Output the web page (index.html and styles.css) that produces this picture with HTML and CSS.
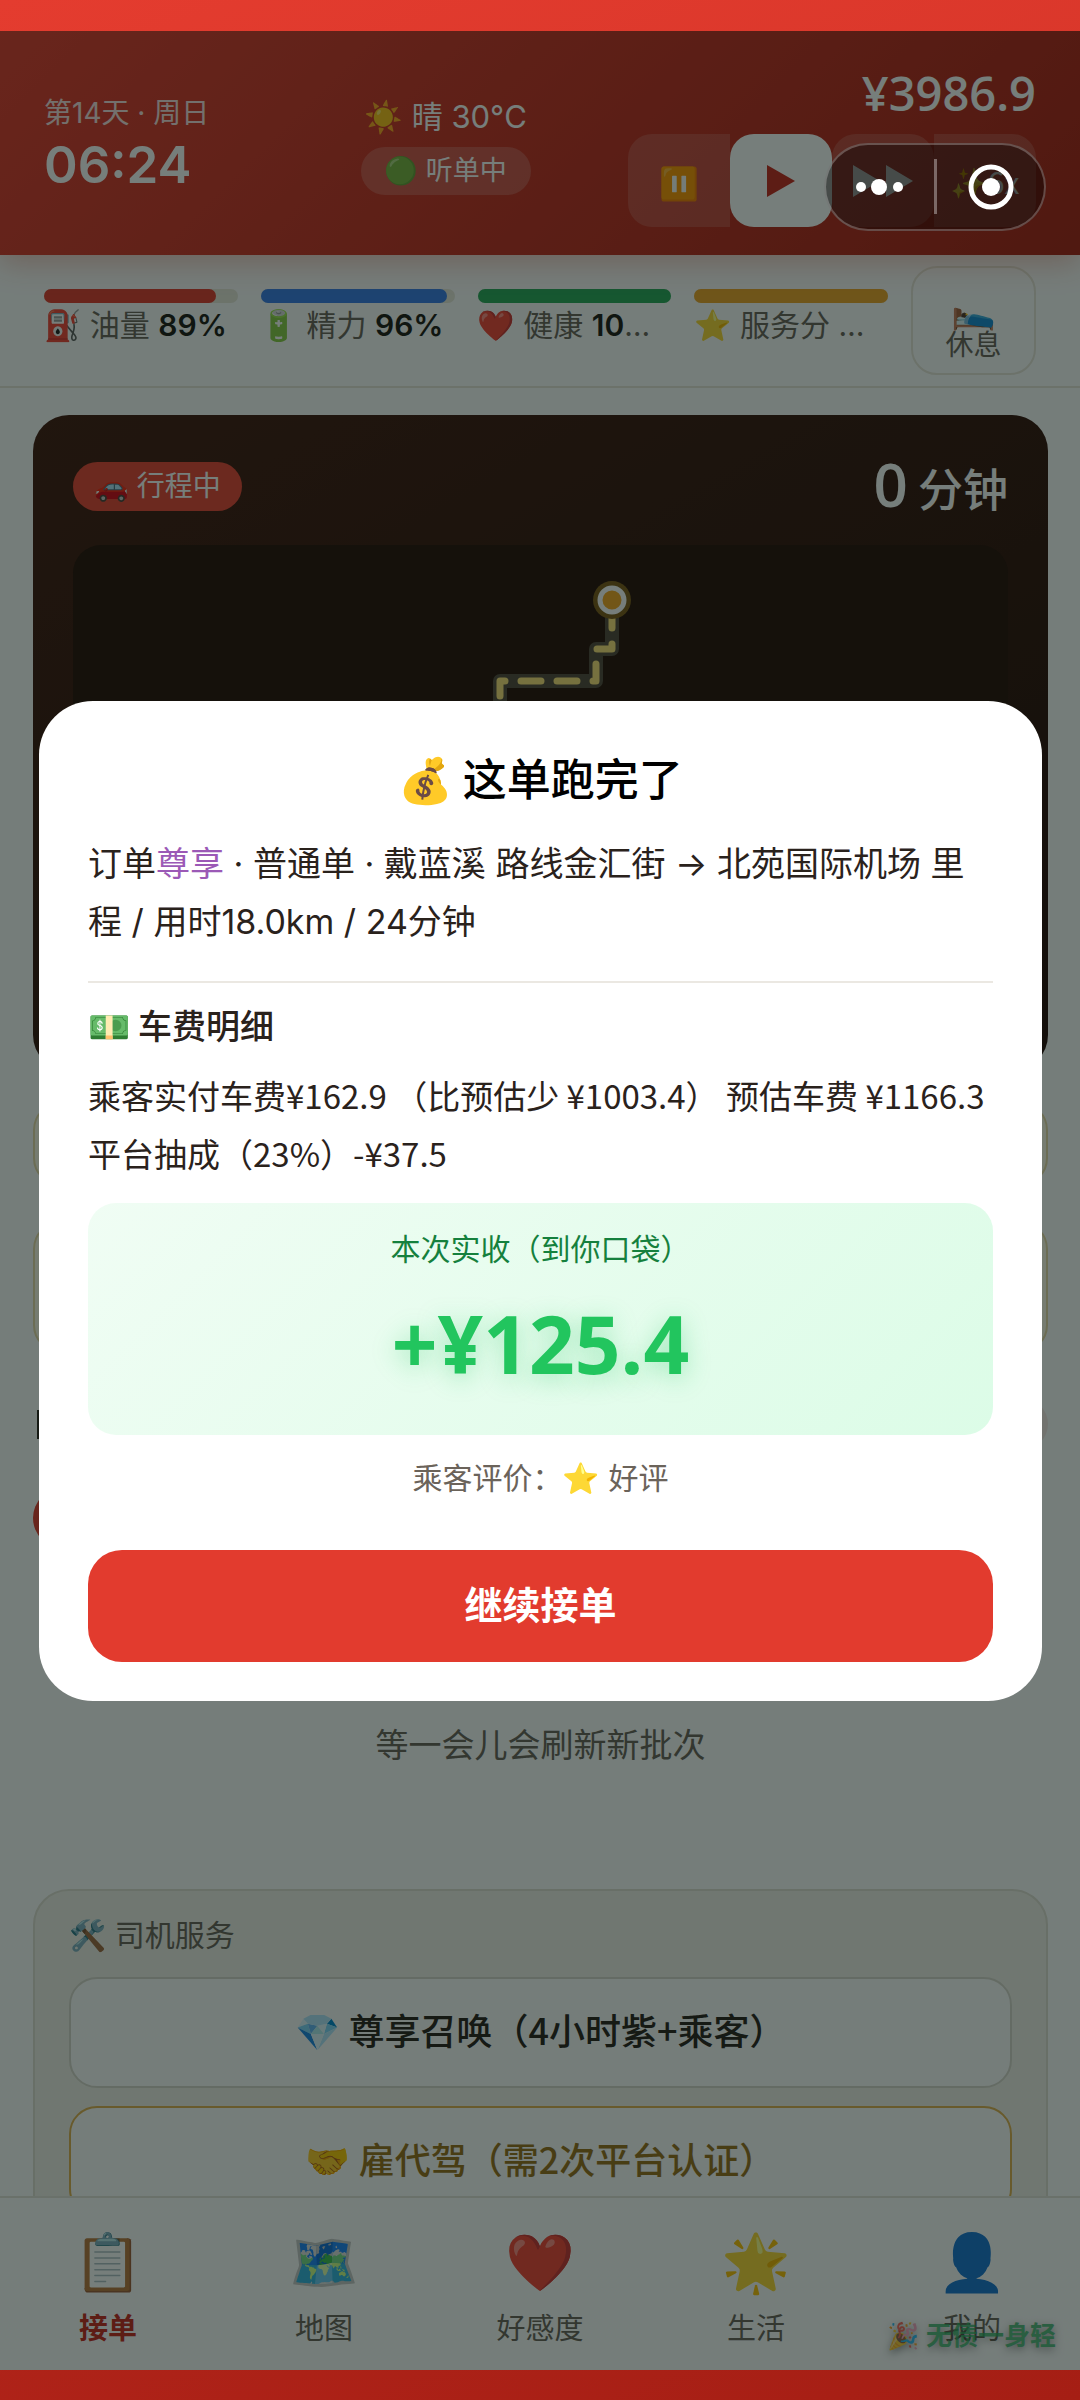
FILE: index.html
```html
<!DOCTYPE html>
<html lang="zh-CN">
<head>
<meta charset="utf-8">
<meta name="viewport" content="width=device-width, initial-scale=1">
<title>这单跑完了</title>
<link rel="stylesheet" href="styles.css">
</head>
<body>
<div class="app">
  <header class="topbar">
    <div class="clock">
      <div class="clock-day">第14天 · 周日</div>
      <div class="clock-time">06:24</div>
    </div>
    <div class="weather">
      <div class="weather-now">☀️ 晴 30°C</div>
      <div class="status-pill">🟢 听单中</div>
    </div>
    <div class="wallet">
      <div class="money">¥3986.9</div>
      <div class="speeds">
        <button class="speed speed-first" aria-label="暂停">⏸️</button>
        <button class="speed speed-on" aria-label="播放"><svg width="28" height="32" viewBox="0 0 28 32"><path d="M0 0L28 16L0 32Z" fill="#c8281e"/></svg></button>
        <button class="speed" aria-label="快进"><svg width="60" height="32" viewBox="0 0 60 32"><path d="M0 0L27 16L0 32ZM33 0L60 16L33 32Z" fill="#fff"/></svg></button>
        <button class="speed speed-last">✨6x</button>
      </div>
    </div>
  </header>

  <section class="stats">
    <div class="stat"><div class="bar"><div class="fill fuel" style="width:89%"></div></div><div class="stat-text">⛽ 油量 <b>89%</b></div></div>
    <div class="stat"><div class="bar"><div class="fill energy" style="width:96%"></div></div><div class="stat-text">🔋 精力 <b>96%</b></div></div>
    <div class="stat"><div class="bar"><div class="fill health" style="width:100%"></div></div><div class="stat-text">❤️ 健康 <b>10</b>…</div></div>
    <div class="stat"><div class="bar"><div class="fill score" style="width:100%"></div></div><div class="stat-text">⭐ 服务分 …</div></div>
    <button class="rest"><span class="rest-icon">🛌</span><span>休息</span></button>
  </section>

  <main class="content">
    <section class="trip">
      <div class="trip-head">
        <span class="trip-tag">🚗 行程中</span>
        <span class="trip-time"><b>0</b> 分钟</span>
      </div>
      <div class="trip-map">
        <svg class="route" viewBox="0 0 160 260" width="160" height="260" fill="none" stroke-linecap="round" stroke-linejoin="round">
          <path d="M132 35V84H116V116H20V240" stroke="#54483c" stroke-width="14"/>
          <path d="M132 35V84H116V116H20V240" stroke="#ffe27a" stroke-width="7" stroke-dasharray="20 16" stroke-dashoffset="-8"/>
          <circle cx="132" cy="35" r="19" fill="#7e5a18"/>
          <circle cx="132" cy="35" r="12" fill="#f5a623" stroke="#fff" stroke-width="5"/>
        </svg>
      </div>
    </section>
    <div class="notice"></div>
    <div class="notice notice-tall"></div>
    <div class="list-head"><span class="list-mark"></span><span class="list-more"></span></div>
    <div class="filter"></div>
    <p class="empty">等一会儿会刷新新批次</p>
    <section class="services">
      <h2 class="services-title">🛠️ 司机服务</h2>
      <button class="service">💎 尊享召唤（4小时紫+乘客）</button>
      <button class="service service-gold">🤝 雇代驾（需2次平台认证）</button>
    </section>
  </main>

  <div class="toast">🎉 无债一身轻</div>
  <nav class="tabs">
    <a class="tab tab-on" href="#"><span class="tab-icon">📋</span><span>接单</span></a>
    <a class="tab" href="#"><span class="tab-icon">🗺️</span><span>地图</span></a>
    <a class="tab" href="#"><span class="tab-icon">❤️</span><span>好感度</span></a>
    <a class="tab" href="#"><span class="tab-icon">🌟</span><span>生活</span></a>
    <a class="tab" href="#"><span class="tab-icon">👤</span><span>我的</span></a>
  </nav>

  <div class="mask">
    <section class="modal" role="dialog" aria-labelledby="done">
      <h1 class="modal-title" id="done">💰 这单跑完了</h1>
      <p class="order">订单<span class="vip">尊享</span> · 普通单 · 戴蓝溪 路线金汇街 → 北苑国际机场 里<br>程 / 用时18.0km / 24分钟</p>
      <h2 class="fare-title">💵 车费明细</h2>
      <p class="fare">乘客实付车费¥162.9 （比预估少 ¥1003.4） 预估车费 ¥1166.3<br>平台抽成（23%）-¥37.5</p>
      <div class="income">
        <div class="income-label">本次实收（到你口袋）</div>
        <div class="income-sum">+¥125.4</div>
      </div>
      <p class="rating">乘客评价：⭐ 好评</p>
      <button class="go">继续接单</button>
    </section>
  </div>

  <div class="capsule">
    <svg width="218" height="84" viewBox="0 0 218 84" fill="#fff">
      <circle cx="35" cy="42" r="5"/><circle cx="53" cy="42" r="8"/><circle cx="72" cy="42" r="5"/>
      <path d="M108 14h3v55h-3z" fill-opacity=".35"/>
      <circle cx="165" cy="42" r="20" fill="none" stroke="#fff" stroke-width="5"/><circle cx="165" cy="42" r="9"/>
    </svg>
  </div>
</div>
</body>
</html>
```
FILE: styles.css
```css
* { box-sizing: border-box; }

body {
  margin: 0;
  min-height: 100vh;
  padding: 31px 0 30px;
  background: linear-gradient(160deg, #e43c2f 0%, #a51e14 100%);
  font-family: "Noto Sans CJK SC", "Noto Color Emoji", sans-serif;
  color: #2a221c;
}

h1, h2, p { margin: 0; font-weight: 400; }
button { font: inherit; color: inherit; border: 0; padding: 0; background: none; }
a { color: inherit; text-decoration: none; }
svg { display: block; }

.app {
  position: relative;
  display: flex;
  flex-direction: column;
  height: calc(100vh - 61px);
  background: #fdfcfd;
  overflow: hidden;
}

/* lines that mix Chinese with Latin digits and punctuation */
.clock-day, .weather-now, .status-pill, .stat-text, .trip-tag, .order, .services-title, .rating {
  font-family: Inter, "Noto Sans CJK SC", "Noto Color Emoji", sans-serif;
}

/* top bar */
.topbar {
  position: relative;
  display: flex;
  justify-content: space-between;
  padding: 35px 44px 27px;
  height: 224px;
  background: linear-gradient(135deg, #e23b2e 0%, #ab1f14 100%);
  box-shadow: 0 8px 28px rgba(200, 60, 30, .3);
  color: #fff;
  z-index: 1;
}
.clock { padding-top: 27px; }
.clock-day { font-size: 28px; line-height: 40px; opacity: .85; }
.clock-time { font-family: Inter, sans-serif; font-weight: 600; font-size: 51px; line-height: 64px; }
.weather { display: flex; flex-direction: column; align-items: center; gap: 10px; padding: 31px 0 0 54px; }
.weather-now { font-size: 31px; line-height: 40px; }
.status-pill { padding: 0 24px; border-radius: 24px; background: rgba(255, 255, 255, .18); font-size: 27px; line-height: 48px; }
.wallet { display: flex; flex-direction: column; align-items: flex-end; gap: 14px; }
.money { font-family: "Open Sans", sans-serif; font-size: 47px; line-height: 54px; font-weight: 600; }
.speeds { display: flex; }
.speed { display: flex; align-items: center; justify-content: center; width: 102px; height: 93px; border-radius: 24px; background: rgba(255, 255, 255, .15); font-size: 32px; }
.speed-first { border-radius: 24px 0 0 24px; }
.speed-last { border-radius: 0 24px 24px 0; font-size: 30px; }
.speed-on { background: #fff; }

/* stats */
.stats {
  display: grid;
  grid-template-columns: repeat(4, 1fr) 125px;
  gap: 23px;
  padding: 11px 44px 11px;
  border-bottom: 2px solid #e8e4da;
}
.stat { min-width: 0; padding-top: 23px; }
.bar { height: 14px; border-radius: 7px; background: #e8e6da; }
.fill { height: 14px; border-radius: 7px; }
.fuel { background: #e23b2e; }
.energy { background: #3b7de8; }
.health { background: #2aa85a; }
.score { background: #f0a528; }
.stat-text { font-size: 30px; line-height: 44px; color: #6b635a; white-space: nowrap; overflow: hidden; }
.stat-text b { color: #1e1a16; font-weight: 600; }
.rest { display: flex; flex-direction: column; align-items: center; justify-content: center; height: 109px; border: 2px solid #e8e4da; border-radius: 26px; background: #fdfcfd; font-size: 28px; line-height: 28px; color: #6b635a; }
.rest-icon { font-size: 36px; line-height: 44px; }

/* page content */
.content { flex: 1; min-height: 0; overflow: hidden; padding: 27px 32px 0 33px; }
.trip { height: 656px; padding: 42px 40px; border-radius: 36px; background: linear-gradient(150deg, #43190f 0%, #250b08 100%); color: #fff; }
.trip-head { display: flex; align-items: center; justify-content: space-between; height: 58px; margin-bottom: 30px; }
.trip-tag { padding: 0 21px; border-radius: 25px; background: #e84434; font-size: 28px; line-height: 49px; }
.trip-time { font-size: 45px; line-height: 58px; font-weight: 500; }
.trip-time b { font-family: "Open Sans", sans-serif; font-size: 60px; line-height: 58px; font-weight: 600; }
.trip-map { height: 480px; padding: 20px 0 0 407px; border-radius: 28px; background: #280e08; }
.notice { height: 84px; margin-top: 31px; border: 2px solid #e8d9a8; border-radius: 28px; background: #fffbe9; }
.notice-tall { height: 132px; margin-top: 35px; }
.list-head { display: flex; align-items: center; justify-content: space-between; height: 52px; margin-top: 45px; }
.list-mark { width: 40px; height: 29px; margin-left: 4px; border-left: 3px solid #2a221c; }
.list-more { width: 120px; height: 52px; border-radius: 26px; background: #f6e7e4; }
.filter { width: 140px; height: 60px; margin-top: 38px; border-radius: 30px; background: #e23b2e; }
.empty { margin-top: 170px; text-align: center; font-size: 33px; line-height: 50px; color: #6b635a; }
.services { display: flex; flex-direction: column; gap: 18px; height: 380px; margin-top: 121px; padding: 22px 34px; border: 2px solid #e0ddd2; border-radius: 36px; background: #f2f0e9; }
.services-title { margin-bottom: 2px; font-size: 30px; line-height: 44px; color: #6b635a; }
.service { height: 111px; flex: none; padding-bottom: 8px; border: 2px solid #d8d6cc; border-radius: 28px; background: #fdfcfd; font-size: 36px; font-weight: 500; color: #2a221c; }
.service-gold { border-color: #e0b050; color: #9a701c; }

/* bottom navigation */
.tabs { display: flex; height: 174px; border-top: 2px solid #e4e2da; background: #fdfcfd; }
.tab { flex: 1; display: flex; flex-direction: column; align-items: center; padding-top: 24px; gap: 10px; font-size: 29px; line-height: 44px; color: #6b635a; }
.tab-icon { font-size: 56px; line-height: 72px; }
.tab-on { color: #c8281e; font-weight: 700; }
.toast { position: absolute; right: 24px; bottom: 16px; z-index: 2; font-size: 26px; line-height: 40px; font-weight: 700; color: #2fa860; text-shadow: 0 3px 8px rgba(0, 0, 0, .5); opacity: .8; }

/* settlement dialog */
.mask { position: absolute; inset: 0; z-index: 3; display: flex; align-items: center; padding: 0 38px 0 39px; background: rgba(5, 20, 15, .55); }
.modal { flex: 1; padding: 42px 49px 39px; border-radius: 54px; background: #fff; }
.modal-title { text-align: center; font-size: 44px; line-height: 68px; font-weight: 500; color: #000; }
.order { margin-top: 24px; padding-bottom: 30px; border-bottom: 2px solid #ebe8e2; font-size: 34px; line-height: 58px; white-space: nowrap; }
.vip { color: #9b59b6; }
.fare-title { margin-top: 17px; font-size: 34px; line-height: 50px; font-weight: 500; }
.fare { margin-top: 16px; font-size: 33px; line-height: 58px; white-space: nowrap; }
.income { margin-top: 21px; padding: 22px 0; height: 232px; border-radius: 28px; background: linear-gradient(135deg, #f0fdf4 0%, #dcfce7 100%); text-align: center; }
.income-label { font-size: 30px; line-height: 44px; color: #15803d; }
.income-sum { margin-top: 14px; font-family: "Open Sans", sans-serif; font-size: 80px; line-height: 120px; font-weight: 700; color: #22c55e; text-shadow: 0 5px 24px rgba(34, 197, 94, .35); }
.rating { margin-top: 21px; text-align: center; font-size: 30px; line-height: 44px; color: #6b635a; }
.go { display: block; width: 100%; height: 112px; margin-top: 50px; padding-bottom: 6px; border-radius: 34px; background: #e23b2e; color: #fff; font-size: 38px; font-weight: 700; }

/* mini-program capsule */
.capsule { position: absolute; top: 112px; right: 34px; z-index: 4; border: 2px solid rgba(255, 255, 255, .25); border-radius: 44px; background: rgba(0, 0, 0, .4); }
```
